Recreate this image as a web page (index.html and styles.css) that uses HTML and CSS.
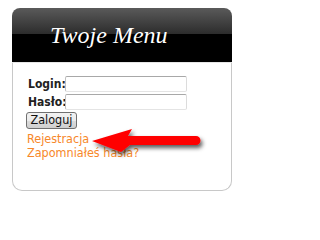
FILE: index.html
```html
<!DOCTYPE html>
<html lang="pl">
<head>
<meta charset="utf-8">
<title>Twoje Menu</title>
<link rel="stylesheet" href="styles.css">
</head>
<body>
<div class="card">
  <div class="card-head">Twoje Menu</div>
  <div class="card-body">
    <form class="login">
      <div class="row"><label class="lbl">Login:</label><input class="field" type="text"></div>
      <div class="row"><label class="lbl">Hasło:</label><input class="field" type="password"></div>
      <div class="row"><button class="btn" type="button">Zaloguj</button></div>
    </form>
    <div class="links">
      <a class="link" href="#">Rejestracja</a>
      <a class="link" href="#">Zapomniałeś hasła?</a>
    </div>
    <svg class="arrow" width="241" height="203" viewBox="0 0 241 203">
      <defs>
        <filter id="sh" x="-20%" y="-40%" width="140%" height="190%">
          <feDropShadow dx="2" dy="3" stdDeviation="2" flood-color="#000" flood-opacity="0.65"/>
        </filter>
      </defs>
      <path d="M92,141 L132,129 L128,136 L196,136 A4.5,4.5 0 0 1 196,145 L130,145 L121,152 Z" fill="#ff0000" filter="url(#sh)"/>
    </svg>
  </div>
</div>
</body>
</html>
```
FILE: styles.css
```css
html, body {
  margin: 0;
  padding: 0;
  background: #fff;
}
body {
  padding: 8px 0 0 12px;
  font-family: "DejaVu Sans Condensed", "DejaVu Sans", sans-serif;
  font-size: 12px;
}
.card {
  width: 220px;
}
.card-head {
  height: 55px;
  box-sizing: border-box;
  border-radius: 8px 8px 0 0;
  background: linear-gradient(#5a5a5a, #2c2c2c 26px, #000 26px, #000);
  color: #fff;
  font-family: "Liberation Serif", "Times New Roman", serif;
  font-style: italic;
  font-size: 24px;
  line-height: 24px;
  padding: 15px 0 0 38px;
  border-bottom: 1px solid #e6e6e6;
}
.card-body {
  height: 128px;
  box-sizing: border-box;
  border: 1px solid #c8c8c8;
  border-top: none;
  border-radius: 0 0 10px 10px;
  padding: 12px 0 0 13px;
}
.row {
  display: flex;
  align-items: center;
  height: 18px;
}
.lbl {
  flex: none;
  box-sizing: border-box;
  width: 39px;
  white-space: nowrap;
  font-weight: bold;
  color: #222;
  font-size: 12px;
  padding-left: 2px;
}
.field {
  box-sizing: border-box;
  width: 122px;
  height: 16px;
  margin: 0;
  padding: 0 2px;
  border: 1px solid;
  border-color: #a8a8a8 #dcdcdc #e4e4e4 #c0c0c0;
  border-radius: 2px;
  background: #fff;
}
.btn {
  box-sizing: border-box;
  height: 17px;
  width: 51px;
  margin: 0;
  padding: 0;
  border: 1px solid #707070;
  border-radius: 3px;
  background: linear-gradient(#f2f2f2, #ebebeb 50%, #dcdcdc 50%, #cfcfcf);
  font-family: "DejaVu Sans Condensed", "DejaVu Sans", sans-serif;
  font-size: 12.5px;
  line-height: 14px;
  color: #111;
}
.links {
  display: flex;
  flex-direction: column;
  margin-top: 3px;
  padding-left: 1px;
}
.link {
  color: #f7882a;
  text-decoration: none;
  font-size: 12.5px;
  line-height: 14px;
}
.arrow {
  position: absolute;
  left: 0;
  top: 0;
  pointer-events: none;
}
```
